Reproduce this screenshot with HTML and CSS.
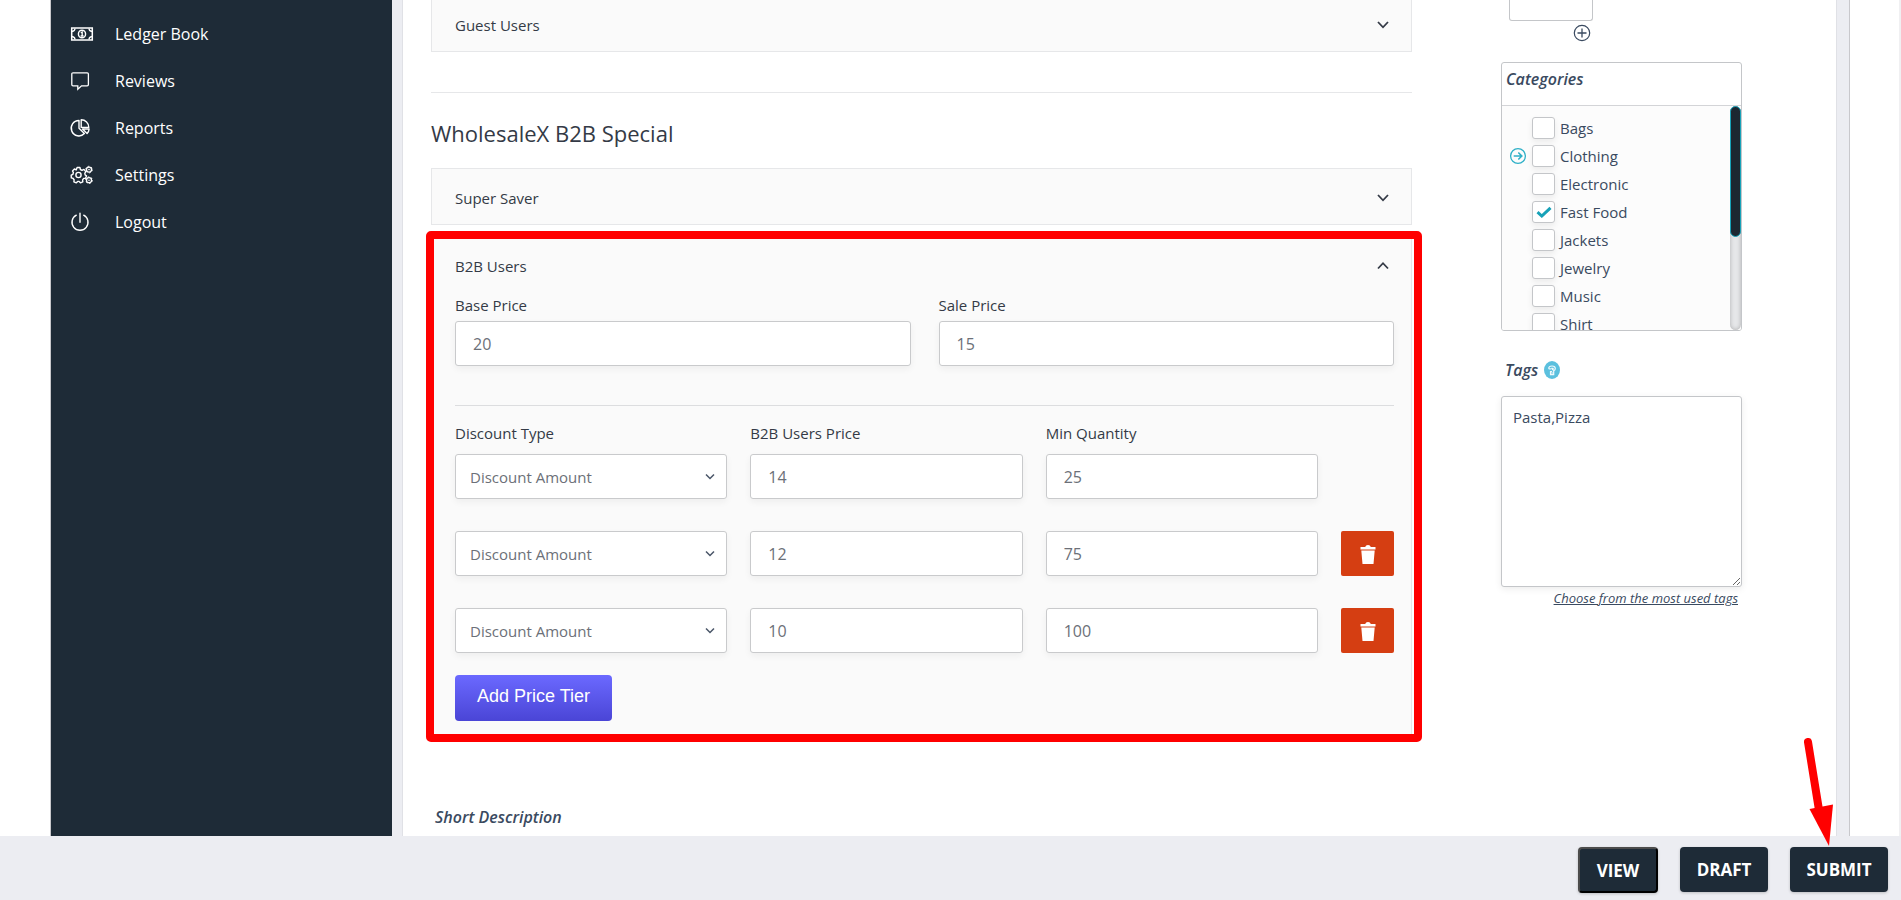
FILE: index.html
```html
<!DOCTYPE html>
<html lang="en">
<head>
<meta charset="utf-8">
<title>Edit Product</title>
<link rel="stylesheet" href="styles.css">
</head>
<body>
<div class="shell">
  <nav class="sidebar">
    <a class="nav-item" href="#">
      <svg class="nav-icon" width="22" height="18" viewBox="0 0 22 18"><rect x="0.7" y="3" width="20.6" height="12" fill="none" stroke="#fff" stroke-width="1.5"/><ellipse cx="11" cy="9" rx="3.6" ry="3.8" fill="none" stroke="#fff" stroke-width="1.4"/><path d="M9.800 7.800l1.400-.8v4M9.600 11h3" fill="none" stroke="#fff" stroke-width="1.300"/><path d="M1 6.500Q4 6 4 3.500M1 11.500q3 .5 3 3M21 6.500q-3-.5-3-3M21 11.500q-3 .5-3 3" fill="none" stroke="#fff" stroke-width="1.300"/></svg>
      <span>Ledger Book</span></a>
    <a class="nav-item" href="#">
      <svg class="nav-icon" width="22" height="18" viewBox="0 0 22 18"><path d="M2 .8h14.2q1.2 0 1.2 1.2v10.600q0 1.200-1.200 1.200H10.500l-3.700 3.400v-3.400H2Q.8 13.800.8 12.600V2Q.8.8 2 .8z" fill="none" stroke="#fff" stroke-width="1.300"/></svg>
      <span>Reviews</span></a>
    <a class="nav-item" href="#">
      <svg class="nav-icon" width="22" height="18" viewBox="0 0 22 18"><path d="M8 1.500a7.700 7.700 0 1 0 5.400 13.100L8 9.200zM10.200.8a7.600 7.600 0 0 1 7.600 7.600h-7.600zM11.500 10h6.600a7.600 7.600 0 0 1-2 4.600z" fill="none" stroke="#fff" stroke-width="1.400" stroke-linejoin="round"/></svg>
      <span>Reports</span></a>
    <a class="nav-item" href="#">
      <svg class="nav-icon" width="22" height="18" viewBox="0 0 22 18"><path d="M6.100 1.500h2.800l.5 2 1.600.8 1.900-.9 1.900 2.200-1 1.800.4 1.600 1.300.9-1 2.400-1.800.1-1.100 1.500.2 2-2.300.9-1.400-1.400H6.700l-1.400 1.400-2.400-1 .2-2-1.200-1.500-1.600-.4-.1-2.700 1.700-.9.500-1.700-.9-1.700 1.900-1.900 1.800.9z" fill="none" stroke="#fff" stroke-width="1.400" stroke-linejoin="round"/><circle cx="7.500" cy="9" r="2.600" fill="none" stroke="#fff" stroke-width="1.400"/><g fill="none" stroke="#fff"><circle cx="18" cy="3.600" r="2.500" stroke-width="1.300"/><circle cx="18" cy="3.600" r="3.300" stroke-width="1" stroke-dasharray="1.700 1.750"/><circle cx="18" cy="14.200" r="2.500" stroke-width="1.300"/><circle cx="18" cy="14.200" r="3.300" stroke-width="1" stroke-dasharray="1.700 1.750"/></g><circle cx="18" cy="3.600" r=".8" fill="#fff"/><circle cx="18" cy="14.200" r=".8" fill="#fff"/></svg>
      <span>Settings</span></a>
    <a class="nav-item" href="#">
      <svg class="nav-icon" width="22" height="18" viewBox="0 0 22 18"><path d="M5.300 2.200a8 8 0 1 0 7.400 0M9 .3v9" fill="none" stroke="#fff" stroke-width="1.400" stroke-linecap="round"/></svg>
      <span>Logout</span></a>
  </nav>

  <main class="content">
    <div class="main-col">
      <section class="accordion accordion-cut">
        <button class="acc-head" type="button"><span>Guest Users</span><svg width="14" height="10" viewBox="0 0 14 10"><path d="M2 2l5 5.300L12 2" fill="none" stroke="#343a46" stroke-width="1.800"/></svg></button>
      </section>
      <hr class="divider">
      <h2 class="title">WholesaleX B2B Special</h2>
      <section class="accordion">
        <button class="acc-head" type="button"><span>Super Saver</span><svg width="14" height="10" viewBox="0 0 14 10"><path d="M2 2l5 5.300L12 2" fill="none" stroke="#343a46" stroke-width="1.800"/></svg></button>
      </section>
      <section class="accordion accordion-open">
        <button class="acc-head" type="button"><span>B2B Users</span><svg width="14" height="10" viewBox="0 0 14 10"><path d="M2 7.500l5-5.300 5 5.300" fill="none" stroke="#343a46" stroke-width="1.800"/></svg></button>
        <div class="prices">
          <div class="field"><label for="base">Base Price</label><input id="base" class="box" type="text" value="20"></div>
          <div class="field"><label for="sale">Sale Price</label><input id="sale" class="box" type="text" value="15"></div>
        </div>
        <div class="tiers tier-labels">
          <label for="type1">Discount Type</label>
          <label for="price1">B2B Users Price</label>
          <label for="qty1">Min Quantity</label>
        </div>
        <div class="tiers">
          <select id="type1" class="box"><option>Discount Amount</option></select>
          <input id="price1" class="box" type="text" value="14">
          <input id="qty1" class="box" type="text" value="25">
          <span></span>

          <select class="box" aria-label="Discount Type"><option>Discount Amount</option></select>
          <input class="box" type="text" value="12" aria-label="B2B Users Price">
          <input class="box" type="text" value="75" aria-label="Min Quantity">
          <button class="trash" type="button" aria-label="Delete tier"><svg width="16" height="20" viewBox="0 0 16 20"><path d="M.5 3h4.700q.5-2 2.800-2t2.800 2h4.700v2.600H.5zM1.300 6.600h13.400L13.500 20h-11z" fill="#fff"/></svg></button>

          <select class="box" aria-label="Discount Type"><option>Discount Amount</option></select>
          <input class="box" type="text" value="10" aria-label="B2B Users Price">
          <input class="box" type="text" value="100" aria-label="Min Quantity">
          <button class="trash" type="button" aria-label="Delete tier"><svg width="16" height="20" viewBox="0 0 16 20"><path d="M.5 3h4.700q.5-2 2.800-2t2.800 2h4.700v2.600H.5zM1.300 6.600h13.400L13.500 20h-11z" fill="#fff"/></svg></button>
        </div>
        <button class="add-tier" type="button">Add Price Tier</button>
        <div class="highlight"></div>
      </section>
      <h3 class="caption short-desc">Short Description</h3>
    </div>

    <aside class="side-col">
      <div class="gallery">
        <div class="thumb"></div>
        <button class="icon-btn" type="button" aria-label="Add image"><svg width="18" height="18" viewBox="0 0 18 18"><path d="M9 4.500v9M4.500 9h9" stroke="#3a4a60" stroke-width="1.300"/><circle cx="9" cy="9" r="7.700" fill="none" stroke="#3a4a60" stroke-width="1.200"/></svg></button>
      </div>
      <section class="categories">
        <h3 class="caption cat-head">Categories</h3>
        <div class="cat-body">
          <ul class="cat-list">
            <li><label><input type="checkbox">Bags</label></li>
            <li><button class="icon-btn expand" type="button" aria-label="Expand Clothing"><svg width="18" height="18" viewBox="0 0 18 18"><circle cx="9" cy="9" r="7.400" fill="none" stroke="#2fb0c7" stroke-width="1.300"/><path d="M4.700 9h8M9.300 5.500L12.800 9l-3.500 3.500" fill="none" stroke="#2fb0c7" stroke-width="1.600"/></svg></button><label><input type="checkbox">Clothing</label></li>
            <li><label><input type="checkbox">Electronic</label></li>
            <li><label><input type="checkbox" checked>Fast Food</label></li>
            <li><label><input type="checkbox">Jackets</label></li>
            <li><label><input type="checkbox">Jewelry</label></li>
            <li><label><input type="checkbox">Music</label></li>
            <li><label><input type="checkbox">Shirt</label></li>
          </ul>
          <div class="scroll-track"><div class="scroll-thumb"></div></div>
        </div>
      </section>
      <div class="tags">
        <label class="caption tags-label" for="tags">Tags
          <svg width="16" height="18" viewBox="0 0 16 18"><ellipse cx="8" cy="9" rx="8" ry="9" fill="#5bc0de"/><path d="M4.700 7.800Q4.700 5 8 5t3.300 2.600q0 1.500-1.600 2.200v3.900H6.500v-3.200h1.600M4.700 7.800h2.200M7.200 7.300h1.900v1.300H7.800M6.500 12h3.200" fill="none" stroke="#fff" stroke-opacity=".9" stroke-width="1.200"/></svg></label>
        <textarea id="tags" class="tags-box">Pasta,Pizza</textarea>
        <a class="tags-link" href="#">Choose from the most used tags</a>
      </div>
    </aside>
  </main>
</div>

<footer class="actions">
  <button class="action view" type="button">VIEW</button>
  <button class="action draft" type="button">DRAFT</button>
  <div class="submit-wrap">
    <button class="action submit" type="submit">SUBMIT</button>
    <svg class="arrow" width="30" height="110" viewBox="0 0 30 110"><path d="M6 6L17 74" stroke="#f00" stroke-width="8" stroke-linecap="round"/><path d="M7.500 73L31 68.500 27 110z" fill="#f00"/></svg>
  </div>
</footer>
</body>
</html>
```
FILE: styles.css
```css
* { box-sizing: border-box; }

body {
  margin: 0;
  height: 100vh;
  display: flex;
  flex-direction: column;
  overflow: hidden;
  background: #fff;
  color: #3a4a60;
  font-family: "Segoe UI", "Open Sans", "Noto Sans", sans-serif;
  font-size: 15px;
}

button, input, select, textarea { font: inherit; color: inherit; }

.shell {
  flex: 1;
  min-height: 0;
  display: flex;
  margin: 0 2px 0 50px;
  padding-right: 50px;
  overflow: hidden;
  box-shadow: 2px 0 0 #f0f0f2;
}

/* Sidebar */
.sidebar {
  width: 342px;
  flex: none;
  padding-top: 10px;
  background: #1e2b37;
  border-left: 1px solid #c8c8cc;
}

.nav-item {
  display: flex;
  align-items: center;
  gap: 22px;
  height: 47px;
  padding-left: 20px;
  color: #fff;
  font-size: 16px;
  text-decoration: none;
}

.nav-icon { overflow: visible; }

/* Content */
.content {
  flex: 1;
  display: flex;
  gap: 89px;
  padding: 0 95px 0 29px;
  border: solid #ecedf2;
  border-width: 0 12px 0 10px;
  box-shadow: 1px 0 0 #c8c8cc, inset 1px 0 0 #e0e1e6, inset -1px 0 0 #e0e1e6;
}

.main-col { flex: 1; min-width: 0; }

.accordion {
  background: #fafafa;
  border: 1px solid #e6e7e9;
}

.accordion-cut { border-top: 0; margin-top: -4px; }

.acc-head {
  display: flex;
  align-items: center;
  justify-content: space-between;
  width: 100%;
  height: 55px;
  padding: 2px 21px 0 23px;
  border: 0;
  background: none;
  color: #343a46;
  font-size: 15px;
  font-weight: 500;
}

.divider {
  margin: 40px 0 0;
  border: 0;
  border-top: 1px solid #e6e7e9;
}

.title {
  margin: 26px 0 20px;
  color: #343a46;
  font-size: 22px;
  font-weight: 500;
  line-height: 29px;
}

.accordion-open {
  position: relative;
  margin-top: 11px;
  padding-bottom: 16px;
}

.highlight {
  position: absolute;
  inset: -6px -11px -5px -6px;
  border: 8px solid #f00;
  border-radius: 5px;
  pointer-events: none;
}

.prices {
  display: grid;
  grid-template-columns: 1fr 1fr;
  gap: 28px;
  margin: 0 17px 0 23px;
  padding: 3px 0 39px;
  border-bottom: 1px solid #dcdddf;
}

.field { display: flex; flex-direction: column; gap: 6px; }

.field label, .tiers label {
  color: #343a46;
  font-size: 15px;
  font-weight: 500;
  line-height: 20px;
}

.box {
  width: 100%;
  height: 45px;
  padding: 0 17px;
  border: 1px solid #c9cacc;
  border-radius: 3px;
  background: #fff;
  box-shadow: 0 3px 7px rgba(0, 0, 0, 0.05);
  color: #6c7078;
  font-size: 16px;
}

select.box {
  padding: 0 14px;
  appearance: none;
  background: #fff url("data:image/svg+xml,%3Csvg xmlns='http://www.w3.org/2000/svg' width='10' height='8'%3E%3Cpath d='M1 1.500l4 4 4-4' fill='none' stroke='%234a5668' stroke-width='1.500'/%3E%3C/svg%3E") no-repeat right 11px center;
  font-size: 15px;
}

.tiers {
  display: grid;
  grid-template-columns: 1fr 1fr 1fr 53px;
  gap: 32px 23px;
  margin: 0 17px 0 23px;
}

.tier-labels { padding: 17px 0 11px; }

.trash {
  display: flex;
  align-items: center;
  justify-content: center;
  height: 45px;
  padding: 0;
  border: 0;
  border-radius: 2px;
  background: #d53e12;
}

.add-tier {
  display: block;
  height: 46px;
  margin: 22px 0 0 23px;
  padding: 0 22px 4px;
  border: 0;
  border-radius: 4px;
  background: linear-gradient(#6b69ff, #4a45d6);
  color: #fff;
  font-family: "Liberation Sans", Arial, sans-serif;
  font-size: 18px;
}

.caption {
  margin: 0;
  color: #3a4a60;
  font-size: 16px;
  font-style: italic;
  font-weight: 600;
  line-height: 22px;
}

.short-desc { margin: 68px 0 0 4px; }

/* Side column */
.side-col { width: 241px; flex: none; }

.gallery { width: 84px; margin-left: 8px; }

.thumb {
  height: 21px;
  border: 1px solid #c4c6c9;
  border-top: 0;
  border-radius: 0 0 3px 3px;
}

.icon-btn {
  width: 18px;
  height: 18px;
  padding: 0;
  border: 0;
  background: none;
}

.gallery .icon-btn { display: block; margin: 3px 2px 0 auto; }

.categories {
  height: 269px;
  margin-top: 20px;
  border: 1px solid #c4c6c9;
  border-radius: 3px;
  overflow: hidden;
}

.cat-head {
  height: 43px;
  padding: 5px 4px;
  border-bottom: 1px solid #d3d4d7;
}

.cat-body {
  display: flex;
  height: 224px;
  background: #fcfcfc;
}

.cat-list {
  flex: 1;
  margin: 0;
  padding: 8px 0 0 30px;
  list-style: none;
  overflow: hidden;
}

.cat-list li { position: relative; height: 28px; }

.cat-list label {
  display: flex;
  align-items: center;
  gap: 5px;
  height: 28px;
  line-height: 28px;
}

.cat-list input {
  appearance: none;
  width: 23px;
  height: 22px;
  margin: 0;
  border: 1px solid #c4c6c9;
  border-radius: 3px;
  background: #fff center no-repeat;
  box-shadow: 0 3px 6px rgba(0, 0, 0, 0.07);
}

.cat-list input:checked {
  background-image: url("data:image/svg+xml,%3Csvg xmlns='http://www.w3.org/2000/svg' width='16' height='12'%3E%3Cpath d='M1.500 6.200l4.300 3.800L14.500 1.800' fill='none' stroke='%2317a2b8' stroke-width='3'/%3E%3C/svg%3E");
}

.expand { position: absolute; left: -23px; top: 5px; }

.scroll-track {
  width: 11px;
  border-radius: 6px;
  background: #e6e7e9;
  box-shadow: inset 0 0 4px rgba(0, 0, 0, 0.25);
}

.scroll-thumb {
  height: 131px;
  border: 1px solid #17a2b8;
  border-radius: 6px;
  background: #1c2731;
}

.tags { margin-top: 28px; }

.tags-label { display: flex; align-items: center; gap: 6px; padding-left: 4px; }

.tags-box {
  display: block;
  width: 100%;
  height: 191px;
  margin: 15px 0 0;
  padding: 9px 11px;
  border: 1px solid #c4c6c9;
  border-radius: 3px;
  box-shadow: 0 2px 7px rgba(0, 0, 0, 0.08);
  line-height: 22px;
}

.tags-link {
  display: block;
  margin: 1px 4px 0 0;
  color: #3a4a60;
  font-size: 13px;
  font-style: italic;
  line-height: 20px;
  text-align: right;
}

/* Footer */
.actions {
  display: flex;
  justify-content: flex-end;
  gap: 22px;
  height: 64px;
  flex: none;
  padding: 11px 13px 0 0;
  background: #ecedf2;
}

.action {
  height: 45px;
  padding: 0;
  border: 0;
  border-radius: 4px;
  background: #1e2b37;
  box-shadow: 0 1px 3px rgba(0, 0, 0, 0.2);
  color: #fff;
  font-size: 17px;
  font-weight: 700;
}

.view {
  width: 80px;
  height: 46px;
  border: 2px outset #000;
  border-color: #4c4c4c #000 #000 #4c4c4c;
}

.draft { width: 88px; }

.submit { width: 98px; }

.submit-wrap { position: relative; }

.arrow {
  position: absolute;
  left: 12px;
  bottom: 54px;
  overflow: visible;
  pointer-events: none;
}
```
